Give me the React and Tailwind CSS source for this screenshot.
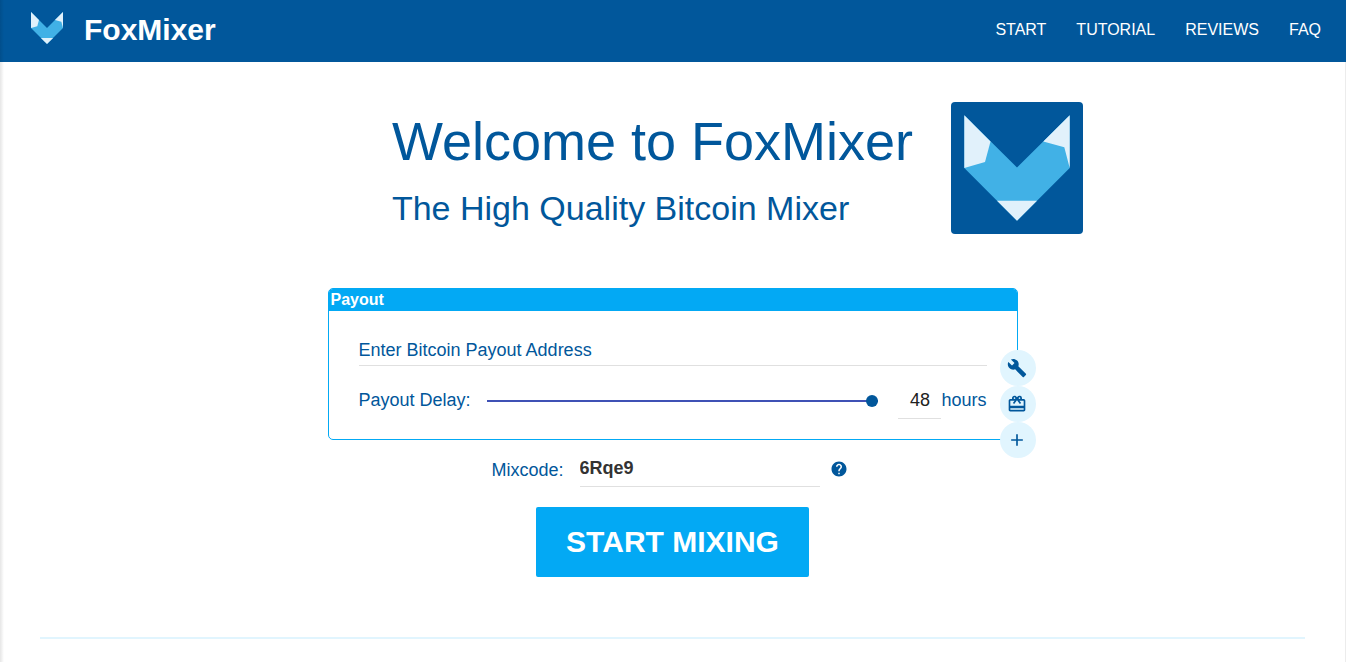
import { useState } from 'react';
import { MdBuild, MdOutlineCardGiftcard, MdAdd, MdHelp } from 'react-icons/md';

const navLinks = ['START', 'TUTORIAL', 'REVIEWS', 'FAQ'];

const cardActions = [
    { label: 'Settings', Icon: MdBuild },
    { label: 'Donate', Icon: MdOutlineCardGiftcard },
    { label: 'Add payout address', Icon: MdAdd }
];

function FoxLogo({ viewBox, className }) {
    return (
        <svg viewBox={viewBox} className={className} aria-hidden="true">
            <path d="M13.3 13.3L66 65.6L118.7 13.3V66L66 118.7L13.3 66Z" fill="#41b1e6" />
            <path d="M13.3 13.3L39.5 39.5L34 60L13.3 66Z" fill="#e1f1fb" />
            <path d="M118.7 13.3L92.3 39.5L113.3 45.3L118.7 66Z" fill="#e1f1fb" />
            <path d="M46 98.7H86L66 118.7Z" fill="#e1f1fb" />
        </svg>
    );
}

export default function App() {
    const [address, setAddress] = useState('');
    const [delay, setDelay] = useState(48);
    const [mixcode, setMixcode] = useState('6Rqe9');

    return (
        <div className="relative min-h-screen border-r border-[#ececec] bg-white font-['Liberation_Sans',Arial,sans-serif] text-[#01579b]">
            {/* Soft shadow on the left edge */}
            <div className="pointer-events-none absolute inset-y-0 left-0 z-10 w-1 bg-linear-to-r from-black/10 to-transparent" />

            {/* Header */}
            <header className="-mr-px flex h-[62px] items-center justify-between bg-[#01579b] pr-[25px] pl-[31px] text-white">
                <a href="#start" className="flex items-center gap-[21px]">
                    <FoxLogo viewBox="13.3 13.3 105.4 105.4" className="mb-1.5 size-8" />
                    <span className="mb-0.5 text-[30px] leading-8 font-bold">FoxMixer</span>
                </a>
                <nav className="mb-0.5 flex gap-[30px]">
                    {navLinks.map((link) => (
                        <a key={link} href={`#${link.toLowerCase()}`} className="text-base hover:underline">
                            {link}
                        </a>
                    ))}
                </nav>
            </header>

            <main className="px-10 pt-10">
                {/* Hero */}
                <section className="flex justify-center gap-[38px] pl-[130px]">
                    <div>
                        <h1 className="text-[54px] leading-[78px]">Welcome to FoxMixer</h1>
                        <h2 className="text-[34px] leading-[56px]">The High Quality Bitcoin Mixer</h2>
                    </div>
                    <FoxLogo viewBox="0 0 132 132" className="size-[132px] rounded bg-[#01579b]" />
                </section>

                <form className="text-lg" onSubmit={(e) => e.preventDefault()}>
                    {/* Payout card */}
                    <section className="relative mx-auto mt-[52px] max-w-[690px] rounded-[5px] border border-[#03a9f4]">
                        <h3 className="rounded-t-[4px] bg-[#03a9f4] pl-0.5 text-base leading-[22px] font-bold text-white">Payout</h3>
                        <div className="px-[30px] pt-6 pb-5">
                            <div className="relative">
                                <input
                                    id="address"
                                    type="text"
                                    className="peer block h-[31px] w-full border-b border-[#e0e0e0] focus:outline-none"
                                    value={address}
                                    onChange={(e) => setAddress(e.target.value)}
                                />
                                {/* Label sits in the field until something is typed */}
                                <label
                                    htmlFor="address"
                                    className={address ? 'hidden' : 'pointer-events-none absolute inset-x-0 top-0 leading-[30px]'}
                                >
                                    Enter Bitcoin Payout Address
                                </label>
                            </div>
                            <div className="mt-[15px] flex items-center">
                                <label htmlFor="delay">Payout Delay:</label>
                                <input
                                    id="delay"
                                    type="range"
                                    min="0"
                                    max="48"
                                    className="mx-5 mt-0.5 ml-4 h-3 min-w-0 flex-1 cursor-pointer appearance-none bg-transparent [&::-webkit-slider-runnable-track]:h-0.5 [&::-webkit-slider-runnable-track]:bg-[#3f51b5] [&::-webkit-slider-thumb]:-mt-[5px] [&::-webkit-slider-thumb]:size-3 [&::-webkit-slider-thumb]:appearance-none [&::-webkit-slider-thumb]:rounded-full [&::-webkit-slider-thumb]:bg-[#01579b]"
                                    value={delay}
                                    onChange={(e) => setDelay(Number(e.target.value))}
                                />
                                <input
                                    id="hours"
                                    type="text"
                                    inputMode="numeric"
                                    className="h-[38px] w-[43px] border-b border-[#e0e0e0] pt-0.5 text-center text-[#212121] focus:outline-none"
                                    value={delay}
                                    onChange={(e) => setDelay(Number(e.target.value) || 0)}
                                />
                                <label htmlFor="hours">hours</label>
                            </div>
                        </div>
                        <div className="absolute -right-[19px] -bottom-[19px] flex flex-col">
                            {cardActions.map(({ label, Icon }) => (
                                <button
                                    key={label}
                                    type="button"
                                    aria-label={label}
                                    className="flex size-9 items-center justify-center rounded-full bg-[#e1f5fe] pr-0.5 hover:bg-[#b3e5fc]"
                                >
                                    <Icon size={20} />
                                </button>
                            ))}
                        </div>
                    </section>

                    {/* Mixcode */}
                    <div className="mt-2.5 flex items-center justify-center pl-1">
                        <label htmlFor="mixcode" className="pt-0.5">Mixcode:</label>
                        <input
                            id="mixcode"
                            type="text"
                            className="ml-4 h-[37px] w-60 border-b border-[#e0e0e0] font-bold text-[#333333] focus:outline-none"
                            value={mixcode}
                            onChange={(e) => setMixcode(e.target.value)}
                        />
                        <button type="button" aria-label="What is a mixcode?" className="flex h-9 w-[38px] items-center justify-center">
                            <MdHelp size={18} />
                        </button>
                    </div>

                    <button
                        type="submit"
                        className="mx-auto mt-5 block h-[70px] rounded-xs bg-[#03a9f4] px-[30px] text-[30px] font-bold text-white hover:bg-[#039be5]"
                    >
                        START MIXING
                    </button>
                </form>

                <hr className="mt-[60px] border-t-2 border-[#e1f5fe]" />
            </main>
        </div>
    );
}
